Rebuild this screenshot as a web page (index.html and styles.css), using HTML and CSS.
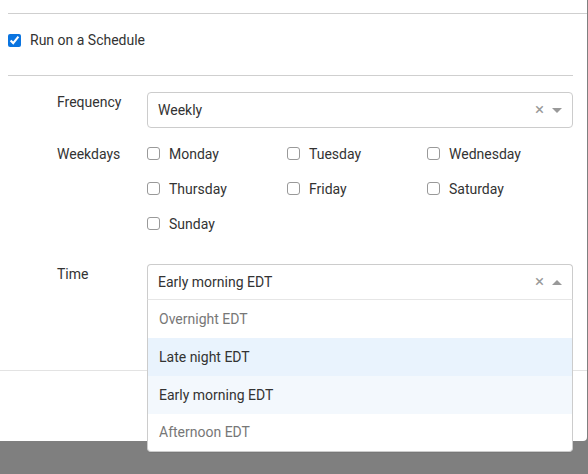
FILE: index.html
```html
<!DOCTYPE html>
<html lang="en">
<head>
    <meta charset="UTF-8">
    <title>Schedule</title>
    <link rel="stylesheet" href="styles.css">
</head>
<body>
    <div class="modal">
        <div class="panel">
            <hr class="rule">
            <label class="schedule-row">
                <input type="checkbox" class="main-check" checked>
                <span>Run on a Schedule</span>
            </label>
            <hr class="rule rule-short">
        </div>

        <div class="form">
            <div class="field field-freq">
                <div class="field-label">Frequency</div>
                <div class="select">
                    <span class="select-value">Weekly</span>
                    <span class="select-clear">&times;</span>
                    <span class="select-arrow"></span>
                </div>
            </div>

            <div class="field">
                <div class="field-label label-days">Weekdays</div>
                <div class="days">
                    <label class="day"><input type="checkbox" class="box"><span>Monday</span></label>
                    <label class="day"><input type="checkbox" class="box"><span>Tuesday</span></label>
                    <label class="day"><input type="checkbox" class="box"><span>Wednesday</span></label>
                    <label class="day"><input type="checkbox" class="box"><span>Thursday</span></label>
                    <label class="day"><input type="checkbox" class="box"><span>Friday</span></label>
                    <label class="day"><input type="checkbox" class="box"><span>Saturday</span></label>
                    <label class="day"><input type="checkbox" class="box"><span>Sunday</span></label>
                </div>
            </div>

            <div class="field field-time">
                <div class="field-label">Time</div>
                <div class="select select-open">
                    <span class="select-value">Early morning EDT</span>
                    <span class="select-clear">&times;</span>
                    <span class="select-arrow arrow-up"></span>
                    <ul class="menu">
                        <li class="option muted">Overnight EDT</li>
                        <li class="option hover">Late night EDT</li>
                        <li class="option selected">Early morning EDT</li>
                        <li class="option muted">Afternoon EDT</li>
                    </ul>
                </div>
            </div>
        </div>

        <div class="footer"></div>
    </div>
</body>
</html>
```

FILE: styles.css
```css
html, body {
    margin: 0;
    padding: 0;
    height: 100%;
}
body {
    background: #7f7f7f;
    font-family: Roboto, "Liberation Sans", Arial, sans-serif;
    font-size: 14px;
    color: #333;
}
.modal {
    background: #fff;
    height: 441px;
    margin-right: 1px;
    border-radius: 0 0 4px 0;
    display: flex;
    flex-direction: column;
}
.panel {
    padding: 13px 0 0 8px;
}
.rule {
    border: none;
    border-top: 1px solid #cfcfcf;
    margin: 0;
}
.rule-short {
    margin-right: 14px;
}
.schedule-row {
    display: flex;
    align-items: center;
    gap: 9px;
    padding: 17px 0 26px 0;
    line-height: 18px;
}
.main-check {
    margin: 0;
    width: 13px;
    height: 13px;
    accent-color: #0a74e0;
}
.form {
    padding: 16px 14px 0 57px;
    flex: 1;
}
.field {
    display: flex;
}
.field-label {
    width: 90px;
    flex-shrink: 0;
    line-height: 20px;
}
.label-days {
    padding-top: 8px;
}
.field-freq {
    margin-bottom: 8px;
}
.field-time {
    margin-top: 23px;
}
.select {
    flex: 1;
    height: 34px;
    border: 1px solid #ccc;
    border-radius: 4px;
    display: flex;
    align-items: center;
    padding: 0 10px;
    position: relative;
    background: #fff;
}
.select-value {
    flex: 1;
    color: #333;
}
.select-clear {
    color: #999;
    font-size: 17px;
    line-height: 1;
    margin-right: 8px;
    margin-top: -1px;
}
.select-arrow {
    width: 0;
    height: 0;
    border-left: 5px solid transparent;
    border-right: 5px solid transparent;
    border-top: 5px solid #999;
}
.arrow-up {
    border-top: none;
    border-bottom: 5px solid #999;
}
.select-open {
    border-radius: 4px 4px 0 0;
    border-bottom-color: #e6e6e6;
}
.menu {
    position: absolute;
    top: 100%;
    left: -1px;
    right: -1px;
    margin: 1px 0 0 0;
    padding: 0;
    list-style: none;
    background: #fff;
    border: 1px solid #ccc;
    border-top: none;
    border-radius: 0 0 4px 4px;
    box-shadow: 0 1px 0 rgba(0,0,0,0.06);
    z-index: 2;
}
.option {
    height: 38px;
    line-height: 38px;
    padding: 0 11px;
    color: #333;
}
.option:last-child {
    height: 37px;
    line-height: 36px;
}
.option.muted {
    color: #777;
}
.option.hover {
    background: #e9f3fd;
}
.option.selected {
    background: #f3f8fd;
}
.days {
    flex: 1;
    display: grid;
    grid-template-columns: 140px 140px 140px;
    grid-auto-rows: 35px;
}
.day {
    display: flex;
    align-items: center;
    gap: 9px;
}
.box {
    appearance: none;
    -webkit-appearance: none;
    margin: 0;
    width: 13px;
    height: 13px;
    border: 1px solid #999;
    border-radius: 3px;
    background: #fff;
}
.footer {
    height: 70px;
    border-top: 1px solid #e3e3e3;
}
```
